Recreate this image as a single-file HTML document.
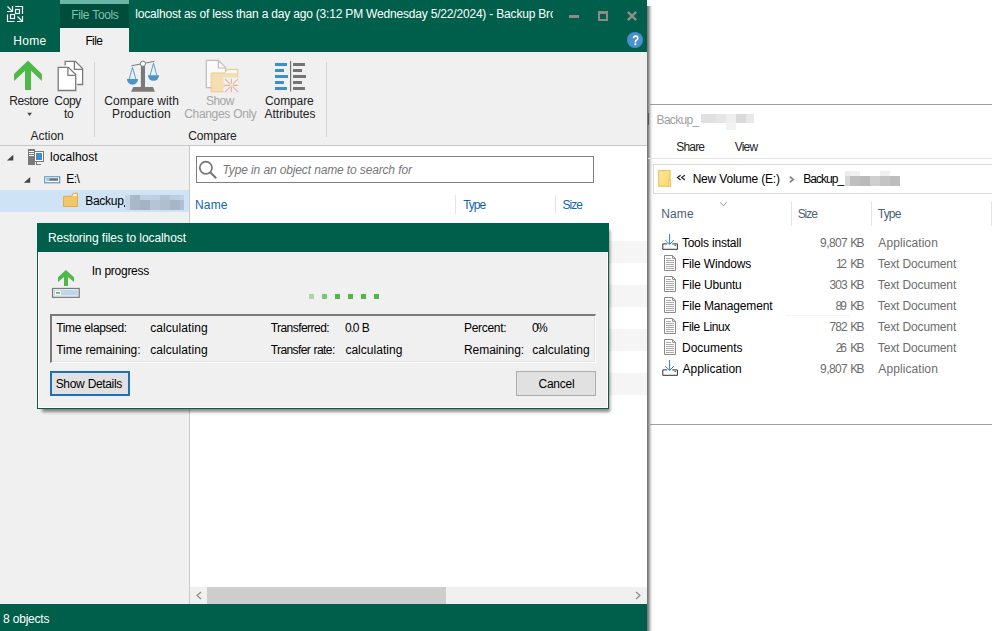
<!DOCTYPE html>
<html><head><meta charset="utf-8"><style>
html,body{margin:0;padding:0;width:992px;height:631px;overflow:hidden;background:#fff;position:relative;font-family:"Liberation Sans",sans-serif;}
body div,body svg{position:absolute;}
.t{white-space:pre;}
</style></head><body>
<div style="left:0px;top:0px;width:647px;height:52px;background:#005f4a;"></div>
<div style="left:60px;top:0px;width:69px;height:4px;background:#6ab5a3;"></div>
<div style="left:60px;top:4px;width:69px;height:24px;background:#004d3d;"></div>
<div class="t" style="left:71.20px;top:8.00px;font-size:12px;line-height:14px;color:#7cc4b0;letter-spacing:-0.350px;word-spacing:0.350px;">File Tools</div>
<div style="left:0;top:0;width:553px;height:28px;overflow:hidden;">
<div class="t" style="left:135.20px;top:7.00px;font-size:12px;line-height:14px;color:#fff;letter-spacing:-0.19px;">localhost as of less than a day ago (3:12 PM Wednesday 5/22/2024) - Backup Bro</div>
</div>
<svg style="left:0px;top:0px;" width="30" height="30" viewBox="0 0 30 30"><g stroke="#fff" stroke-width="1.2" fill="none"><path d="M7.5 6.5 L12 11"/><path d="M12.5 6 V11.5 H7"/><path d="M15.2 6.5 H22.5 V14"/><rect x="15.5" y="9.5" width="4" height="4"/><rect x="10.5" y="14.5" width="4" height="4"/><path d="M7.5 14.5 V21.5 H14.5"/><path d="M17.5 16.5 L22 21"/><path d="M22.5 16 V21.5 H17"/></g></svg>
<div style="left:569px;top:15px;width:10px;height:3px;background:#8e8a8a;"></div>
<svg style="left:596px;top:9px;" width="14" height="14" viewBox="0 0 14 14"><rect x="3" y="3" width="8" height="8" fill="none" stroke="#8e8a8a" stroke-width="2"/><rect x="2" y="2" width="10" height="3" fill="#8e8a8a"/></svg>
<svg style="left:625px;top:9px;" width="14" height="14" viewBox="0 0 14 14"><path d="M2.8 2.8 L11.2 11.2 M11.2 2.8 L2.8 11.2" stroke="#8e8a8a" stroke-width="2.6"/></svg>
<svg style="left:626px;top:31px;" width="18" height="18" viewBox="0 0 18 18"><circle cx="9" cy="9" r="8" fill="#4a90cf"/><path d="M7.6 7.3 Q7.6 5.1 9.7 5.1 Q11.8 5.1 11.8 7.1 Q11.8 8.4 10.4 9.2 Q9.3 9.8 9.3 11.2 V11.6" fill="none" stroke="#fff" stroke-width="1.6"/><rect x="8.4" y="12.3" width="1.9" height="1.8" fill="#fff"/></svg>
<div class="t" style="left:13.30px;top:34.00px;font-size:12px;line-height:14px;color:#fff;letter-spacing:0.300px;word-spacing:-0.300px;">Home</div>
<div style="left:60px;top:28px;width:69px;height:24px;background:#f0f0f0;"></div>
<div class="t" style="left:85.40px;top:34.00px;font-size:12px;line-height:14px;color:#000;letter-spacing:-0.600px;word-spacing:0.600px;">File</div>
<div style="left:0px;top:52px;width:647px;height:93px;background:#f0f0f0;"></div>
<div style="left:0px;top:145px;width:647px;height:1px;background:#c8c8c8;"></div>
<div style="left:94px;top:62px;width:1px;height:75px;background:#d5d5d5;"></div>
<div style="left:326px;top:62px;width:1px;height:75px;background:#d5d5d5;"></div>
<svg style="left:0px;top:52px;" width="50" height="45" viewBox="0 0 50 45"><path d="M28 8.6 L41.9 22 V29 L31.1 18.8 V37.9 H25 V18.8 L14 29 V22 Z" fill="#4fb848"/></svg>
<div class="t" style="left:9.20px;top:94.00px;font-size:12px;line-height:14px;color:#222;letter-spacing:-0.417px;word-spacing:0.417px;">Restore</div>
<svg style="left:25px;top:111px;" width="8" height="6" viewBox="0 0 8 6"><path d="M2.2 1.8 H7 L4.6 5 Z" fill="#444"/></svg>
<svg style="left:50px;top:55px;" width="40" height="40" viewBox="0 0 40 40"><g fill="#fff" stroke="#7a7a7a" stroke-width="1.3"><path d="M15.2 10.5 V6.3 H25.3 L32.6 13.6 V29.5 H27.2"/><path d="M8.2 12.4 H18.4 L25.7 19.6 V35.5 H8.2 Z"/><path d="M17.9 12.4 V20.3 H25.7" fill="none"/><path d="M24.4 6.3 V14.3 H32.6" fill="none"/></g></svg>
<div class="t" style="left:54.30px;top:94.00px;font-size:12px;line-height:14px;color:#222;letter-spacing:-0.333px;word-spacing:0.333px;">Copy</div>
<div class="t" style="left:63.90px;top:107.00px;font-size:12px;line-height:14px;color:#222;letter-spacing:-0.200px;word-spacing:0.200px;">to</div>
<div class="t" style="left:30.40px;top:129.00px;font-size:12px;line-height:14px;color:#222;letter-spacing:0.000px;word-spacing:-0.000px;">Action</div>
<svg style="left:120px;top:55px;" width="50" height="40" viewBox="0 0 50 40"><g><path d="M11.4 10.8 L34.5 6.3" stroke="#7a7a7a" stroke-width="1"/><rect x="20.9" y="10.5" width="4.1" height="22" fill="#7a7a7a"/><path d="M13.3 32 H33 L34.9 36.8 H11.1 Z" fill="#7a7a7a"/><circle cx="22.9" cy="8.7" r="2.6" fill="#fff" stroke="#7a7a7a" stroke-width="1"/><path d="M12.5 12.4 L9.2 24.1 M12.5 12.4 L15.8 24.1" stroke="#4a94cc" stroke-width="0.9" fill="none"/><path d="M6.9 24.1 H18.1 A5.6 5.6 0 0 1 6.9 24.1 Z" fill="#4a94cc"/><path d="M33.5 8.2 L30.2 20.2 M33.5 8.2 L36.8 20.2" stroke="#4a94cc" stroke-width="0.9" fill="none"/><path d="M27.9 20.2 H39.1 A5.6 5.6 0 0 1 27.9 20.2 Z" fill="#4a94cc"/></g></svg>
<div class="t" style="left:104.20px;top:94.00px;font-size:12px;line-height:14px;color:#222;letter-spacing:0.060px;word-spacing:-0.060px;">Compare with</div>
<div class="t" style="left:112.00px;top:107.00px;font-size:12px;line-height:14px;color:#222;letter-spacing:0.144px;word-spacing:-0.144px;">Production</div>
<svg style="left:200px;top:55px;" width="45" height="40" viewBox="0 0 45 40"><g><path d="M6.3 5.4 H18.4 L25.7 12.7 V32.6 H6.3 Z" fill="#fafafa" stroke="#bdbdbd" stroke-width="1.2"/><path d="M18.4 5.4 V13 H25.7" fill="none" stroke="#bdbdbd" stroke-width="1.2"/><path d="M11.1 18 H24.5 L27.9 14.3 H37.9 V36.8 H11.1 Z" fill="#f3dfb1" stroke="#eccb85" stroke-width="1"/><path d="M25 18 L28 15.3 H37 V18 Z" fill="#fafafa"/><path d="M23.5 22.5 H38.5 V37.5 H23.5 V33 L25 31.5 V29 L23.5 27.5 Z" fill="#eef2f6"/><g stroke="#ebab9b" stroke-width="1.1"><path d="M31.4 23.8 V37 M24.7 30.4 H38 M25.3 24.1 L37.9 36.8 M37.9 24.1 L25.3 36.8"/></g><rect x="29.6" y="28.4" width="3.8" height="3.8" fill="#f3e0b8"/></g></svg>
<div class="t" style="left:206.00px;top:94.00px;font-size:12px;line-height:14px;color:#a6a6a6;letter-spacing:-0.533px;word-spacing:0.533px;">Show</div>
<div class="t" style="left:184.30px;top:107.00px;font-size:12px;line-height:14px;color:#a6a6a6;letter-spacing:-0.350px;word-spacing:0.350px;">Changes Only</div>
<svg style="left:268px;top:55px;" width="45" height="40" viewBox="0 0 45 40"><g fill="#3d8fcc"><rect x="7" y="8" width="12" height="3"/><rect x="7" y="14" width="9" height="3"/><rect x="7" y="20" width="13" height="3"/><rect x="7" y="26" width="9" height="3"/><rect x="7" y="32" width="12" height="3"/></g><g fill="#747474"><rect x="25" y="8" width="12" height="3"/><rect x="25" y="14" width="9" height="3"/><rect x="25" y="20" width="13" height="3"/><rect x="25" y="26" width="9" height="3"/><rect x="25" y="32" width="12" height="3"/><rect x="22" y="6" width="1.2" height="30.5"/></g></svg>
<div class="t" style="left:265.00px;top:94.00px;font-size:12px;line-height:14px;color:#222;letter-spacing:-0.100px;word-spacing:0.100px;">Compare</div>
<div class="t" style="left:264.40px;top:107.00px;font-size:12px;line-height:14px;color:#222;letter-spacing:0.044px;word-spacing:-0.044px;">Attributes</div>
<div class="t" style="left:188.30px;top:129.00px;font-size:12px;line-height:14px;color:#222;letter-spacing:-0.150px;word-spacing:0.150px;">Compare</div>
<div style="left:0px;top:146px;width:189px;height:458px;background:#f0f0f0;"></div>
<svg style="left:0px;top:146px;" width="190" height="70" viewBox="0 0 190 70"><path d="M6.9 14.5 H13.3 V8.8 Z" fill="#444"/><path d="M23.9 36.7 H30.2 V31 Z" fill="#444"/></svg>
<svg style="left:26px;top:147px;" width="20" height="20" viewBox="0 0 20 20"><rect x="2" y="2" width="7" height="16" fill="#7a7a7a"/><rect x="3" y="4" width="5" height="1" fill="#fff"/><rect x="3" y="6" width="5" height="1" fill="#fff"/><rect x="3" y="8" width="5" height="1" fill="#fff"/><rect x="9" y="4" width="9" height="11" fill="#7a7a7a"/><rect x="9" y="5" width="8" height="9" fill="#fff"/><rect x="10" y="6" width="6" height="7" fill="#3d8fcc"/><rect x="10" y="15" width="1" height="3" fill="#7a7a7a"/><rect x="10" y="17" width="5" height="1" fill="#7a7a7a"/></svg>
<div class="t" style="left:50.10px;top:150.00px;font-size:12px;line-height:14px;color:#000;letter-spacing:0.025px;word-spacing:-0.025px;">localhost</div>
<svg style="left:43px;top:175px;" width="19" height="10" viewBox="0 0 19 10"><rect x="1.7" y="1.8" width="15" height="6" fill="#fff" stroke="#4a94cc" stroke-width="1.1"/><rect x="3.6" y="3.3" width="11.4" height="2.4" fill="#6d6d6d"/><rect x="3.6" y="3.3" width="3" height="2.4" fill="#a9cbe6"/></svg>
<div class="t" style="left:66.20px;top:172.00px;font-size:12px;line-height:14px;color:#000;letter-spacing:-0.550px;word-spacing:0.550px;">E:\</div>
<div style="left:0px;top:190px;width:189px;height:22px;background:#cfe3f7;"></div>
<svg style="left:62px;top:192px;" width="17" height="16" viewBox="0 0 17 16"><path d="M1.5 4.3 H9.6 L11.2 1.3 H15.5 V14.5 H1.5 Z" fill="#f2c66a" stroke="#e3ac45" stroke-width="1"/><path d="M11.6 2 H14.8 V4 H10.6 Z" fill="#fff"/></svg>
<div class="t" style="left:85.30px;top:194.00px;font-size:12px;line-height:14px;color:#000;letter-spacing:-0.300px;word-spacing:0.300px;">Backup</div>
<div style="left:124px;top:205px;width:1px;height:2px;background:#222;"></div>
<div style="left:125px;top:195px;width:5px;height:5px;background:#c4d6e8;"></div>
<div style="left:130px;top:195px;width:10px;height:5px;background:#a9b9c9;"></div>
<div style="left:140px;top:195px;width:10px;height:5px;background:#bfd0e2;"></div>
<div style="left:150px;top:195px;width:10px;height:5px;background:#bdcfe0;"></div>
<div style="left:160px;top:195px;width:10px;height:5px;background:#b3c3d4;"></div>
<div style="left:170px;top:195px;width:10px;height:5px;background:#bccde0;"></div>
<div style="left:180px;top:195px;width:4px;height:5px;background:#c2d3e5;"></div>
<div style="left:125px;top:200px;width:5px;height:10px;background:#c4d6e8;"></div>
<div style="left:130px;top:200px;width:10px;height:10px;background:#a9b9c9;"></div>
<div style="left:140px;top:200px;width:10px;height:10px;background:#a3b3c3;"></div>
<div style="left:150px;top:200px;width:10px;height:10px;background:#b5c5d6;"></div>
<div style="left:160px;top:200px;width:10px;height:10px;background:#aebfcf;"></div>
<div style="left:170px;top:200px;width:10px;height:10px;background:#a6b6c7;"></div>
<div style="left:180px;top:200px;width:4px;height:10px;background:#b0c0d0;"></div>
<div style="left:190px;top:146px;width:457px;height:441px;background:#fff;"></div>
<div style="left:196px;top:156px;width:398px;height:27px;background:#fff;border:1px solid #7f7f7f;box-sizing:border-box;"></div>
<svg style="left:197px;top:160px;" width="22" height="22" viewBox="0 0 22 22"><circle cx="8.9" cy="7.8" r="6.1" fill="none" stroke="#747474" stroke-width="1.7"/><path d="M13.2 12.2 L19.2 18.2" stroke="#747474" stroke-width="2"/></svg>
<div class="t" style="left:222.60px;top:163.00px;font-size:12px;line-height:14px;color:#777;font-style:italic;letter-spacing:-0.164px;word-spacing:0.164px;">Type in an object name to search for</div>
<div class="t" style="left:195.10px;top:198.00px;font-size:12px;line-height:14px;color:#0f64b0;letter-spacing:0.100px;word-spacing:-0.100px;">Name</div>
<div style="left:455px;top:195px;width:1px;height:19px;background:#e5e5e5;"></div>
<div class="t" style="left:463.20px;top:198.00px;font-size:12px;line-height:14px;color:#0f64b0;letter-spacing:-1.000px;word-spacing:1.000px;">Type</div>
<div style="left:555px;top:195px;width:1px;height:19px;background:#e5e5e5;"></div>
<div class="t" style="left:562.60px;top:198.00px;font-size:12px;line-height:14px;color:#0f64b0;letter-spacing:-1.033px;word-spacing:1.033px;">Size</div>
<div style="left:190px;top:241px;width:457px;height:22px;background:#f5f5f5;"></div>
<div style="left:190px;top:285px;width:457px;height:22px;background:#f5f5f5;"></div>
<div style="left:190px;top:329px;width:457px;height:22px;background:#f5f5f5;"></div>
<div style="left:190px;top:373px;width:457px;height:22px;background:#f5f5f5;"></div>
<div style="left:190px;top:587px;width:457px;height:17px;background:#f0f0f0;"></div>
<div style="left:207px;top:587px;width:239px;height:17px;background:#cdcdcd;"></div>
<svg style="left:193px;top:589px;" width="12" height="13" viewBox="0 0 12 13"><path d="M8 3 L4 6.5 L8 10" fill="none" stroke="#8a8a8a" stroke-width="1.2"/></svg>
<svg style="left:632px;top:589px;" width="12" height="13" viewBox="0 0 12 13"><path d="M4 3 L8 6.5 L4 10" fill="none" stroke="#8a8a8a" stroke-width="1.2"/></svg>
<div style="left:189px;top:146px;width:1px;height:458px;background:#c8c8c8;"></div>
<div style="left:0px;top:604px;width:647px;height:27px;background:#005f4a;"></div>
<div class="t" style="left:3.00px;top:612.00px;font-size:12px;line-height:14px;color:#fff;letter-spacing:-0.229px;word-spacing:0.229px;">8 objects</div>
<div style="left:647px;top:6px;width:6px;height:625px;background:linear-gradient(90deg,#6e6e6e 0px,#8c8c8c 1.5px,#c4c4c4 3px,#eee 4.5px,#fff 6px);"></div>
<div style="left:648px;top:113px;width:1px;height:12px;background:#555;"></div>
<div style="left:648px;top:104px;width:344px;height:1px;background:#9d9d9d;"></div>
<div class="t" style="left:656.60px;top:113.00px;font-size:12px;line-height:14px;color:#a0a0a0;letter-spacing:-0.700px;word-spacing:0.700px;">Backup_</div>
<div style="left:701px;top:114px;width:15px;height:9px;background:#e0e0e0;"></div>
<div style="left:716px;top:114px;width:10px;height:9px;background:#e6e6e6;"></div>
<div style="left:726px;top:114px;width:10px;height:9px;background:#efefef;"></div>
<div style="left:736px;top:114px;width:10px;height:9px;background:#dadada;"></div>
<div style="left:746px;top:114px;width:8px;height:9px;background:#e8e8e8;"></div>
<div style="left:726px;top:123px;width:10px;height:7px;background:#f2f2f2;"></div>
<div class="t" style="left:676.20px;top:140.00px;font-size:12px;line-height:14px;color:#222;letter-spacing:-0.800px;word-spacing:0.800px;">Share</div>
<div class="t" style="left:734.70px;top:140.00px;font-size:12px;line-height:14px;color:#222;letter-spacing:-0.767px;word-spacing:0.767px;">View</div>
<div style="left:648px;top:158px;width:344px;height:1px;background:#e5e5e5;"></div>
<div style="left:653px;top:164px;width:339px;height:30px;background:#fff;border:1px solid #d9d9d9;border-right:none;box-sizing:border-box;"></div>
<svg style="left:657px;top:169px;" width="16" height="19" viewBox="0 0 16 19"><defs><linearGradient id="fg" x1="0" y1="0" x2="1" y2="1"><stop offset="0" stop-color="#fde79a"/><stop offset="1" stop-color="#f8d970"/></linearGradient></defs><rect x="1.7" y="1.6" width="11.4" height="15.6" fill="url(#fg)" stroke="#eac04c" stroke-width="1"/><rect x="11.9" y="10.8" width="1.8" height="6.4" fill="#fff3c0" stroke="#eac04c" stroke-width="0.9"/></svg>
<svg style="left:675px;top:173px;" width="12" height="10" viewBox="0 0 12 10"><path d="M5.6 2.3 L2.6 4.6 L5.6 6.9 M9.8 2.3 L6.8 4.6 L9.8 6.9" fill="none" stroke="#222" stroke-width="1.3"/></svg>
<div class="t" style="left:692.70px;top:172.00px;font-size:12px;line-height:14px;color:#000;letter-spacing:-0.233px;word-spacing:0.233px;">New Volume (E:)</div>
<svg style="left:786px;top:173px;" width="10" height="12" viewBox="0 0 10 12"><path d="M3.8 3.6 L7.2 6.5 L3.8 9.4" fill="none" stroke="#888" stroke-width="1.8"/></svg>
<div class="t" style="left:803.30px;top:172.00px;font-size:12px;line-height:14px;color:#000;letter-spacing:-0.967px;word-spacing:0.967px;">Backup_</div>
<div style="left:845px;top:171px;width:5px;height:5px;background:#ebebeb;"></div>
<div style="left:850px;top:171px;width:10px;height:5px;background:#f0f0f0;"></div>
<div style="left:880px;top:171px;width:10px;height:5px;background:#f0f0f0;"></div>
<div style="left:845px;top:176px;width:5px;height:10px;background:#d8d8d8;"></div>
<div style="left:850px;top:176px;width:10px;height:10px;background:#bfbfbf;"></div>
<div style="left:860px;top:176px;width:10px;height:10px;background:#bababa;"></div>
<div style="left:870px;top:176px;width:10px;height:10px;background:#cfcfcf;"></div>
<div style="left:880px;top:176px;width:10px;height:10px;background:#c4c4c4;"></div>
<div style="left:890px;top:176px;width:10px;height:10px;background:#bdbdbd;"></div>
<svg style="left:718px;top:200px;" width="11" height="8" viewBox="0 0 11 8"><path d="M2.2 2.4 L5.5 5.6 L8.8 2.4" fill="none" stroke="#8f8f8f" stroke-width="1"/></svg>
<div class="t" style="left:661.20px;top:207.00px;font-size:12px;line-height:14px;color:#4c607a;letter-spacing:0.167px;word-spacing:-0.167px;">Name</div>
<div style="left:791px;top:201px;width:1px;height:25px;background:#e5e5e5;"></div>
<div class="t" style="left:797.70px;top:207.00px;font-size:12px;line-height:14px;color:#4c607a;letter-spacing:-1.067px;word-spacing:1.067px;">Size</div>
<div style="left:871px;top:201px;width:1px;height:25px;background:#e5e5e5;"></div>
<div class="t" style="left:877.80px;top:207.00px;font-size:12px;line-height:14px;color:#4c607a;letter-spacing:-0.800px;word-spacing:0.800px;">Type</div>
<div style="left:991px;top:201px;width:1px;height:25px;background:#e5e5e5;"></div>
<svg style="left:660px;top:234px;" width="20" height="17" viewBox="0 0 20 17"><path d="M7.3 9.9 H2.8 V15.3 H17.4 V9.9 H12.2" fill="none" stroke="#2f2f2f" stroke-width="1"/><rect x="14.5" y="11" width="1.5" height="1" fill="#555"/><path d="M9.6 0 V10.6 M5.4 6.2 L9.6 10.4 L13.8 6.2" fill="none" stroke="#2b7dd0" stroke-width="1"/></svg>
<div class="t" style="left:681.90px;top:236.00px;font-size:12px;line-height:14px;color:#000;letter-spacing:-0.236px;word-spacing:0.236px;">Tools install</div>
<div class="t" style="left:820.10px;top:236.00px;font-size:12px;line-height:14px;color:#6d6d6d;letter-spacing:-0.600px;word-spacing:0.600px;">9,807</div>
<div class="t" style="left:850.30px;top:236.00px;font-size:12px;line-height:14px;color:#6d6d6d;letter-spacing:-1.900px;word-spacing:1.900px;">KB</div>
<div class="t" style="left:878.30px;top:236.00px;font-size:12px;line-height:14px;color:#6d6d6d;letter-spacing:0.080px;word-spacing:-0.080px;">Application</div>
<svg style="left:662px;top:255px;" width="16" height="17" viewBox="0 0 16 17"><path d="M2.5 0.5 H10.6 L13.5 3.4 V15.5 H2.5 Z" fill="#fff" stroke="#8a8a8a" stroke-width="1"/><path d="M10.6 0.5 V3.4 H13.5" fill="none" stroke="#8a8a8a" stroke-width="1"/><path d="M4 3.5 H9 M4 5.5 H12 M4 7.5 H12 M4 9.5 H12 M4 11.5 H12 M4 13.5 H12" stroke="#a0a0a0" stroke-width="0.9"/></svg>
<div class="t" style="left:682.00px;top:257.00px;font-size:12px;line-height:14px;color:#000;letter-spacing:-0.210px;word-spacing:0.210px;">File Windows</div>
<div class="t" style="left:836.10px;top:257.00px;font-size:12px;line-height:14px;color:#6d6d6d;letter-spacing:-2.400px;word-spacing:2.400px;">12</div>
<div class="t" style="left:850.30px;top:257.00px;font-size:12px;line-height:14px;color:#6d6d6d;letter-spacing:-1.900px;word-spacing:1.900px;">KB</div>
<div class="t" style="left:877.80px;top:257.00px;font-size:12px;line-height:14px;color:#6d6d6d;letter-spacing:-0.145px;word-spacing:0.145px;">Text Document</div>
<svg style="left:662px;top:276px;" width="16" height="17" viewBox="0 0 16 17"><path d="M2.5 0.5 H10.6 L13.5 3.4 V15.5 H2.5 Z" fill="#fff" stroke="#8a8a8a" stroke-width="1"/><path d="M10.6 0.5 V3.4 H13.5" fill="none" stroke="#8a8a8a" stroke-width="1"/><path d="M4 3.5 H9 M4 5.5 H12 M4 7.5 H12 M4 9.5 H12 M4 11.5 H12 M4 13.5 H12" stroke="#a0a0a0" stroke-width="0.9"/></svg>
<div class="t" style="left:682.00px;top:278.00px;font-size:12px;line-height:14px;color:#000;letter-spacing:-0.178px;word-spacing:0.178px;">File Ubuntu</div>
<div class="t" style="left:829.60px;top:278.00px;font-size:12px;line-height:14px;color:#6d6d6d;letter-spacing:-0.950px;word-spacing:0.950px;">303</div>
<div class="t" style="left:850.30px;top:278.00px;font-size:12px;line-height:14px;color:#6d6d6d;letter-spacing:-1.900px;word-spacing:1.900px;">KB</div>
<div class="t" style="left:877.80px;top:278.00px;font-size:12px;line-height:14px;color:#6d6d6d;letter-spacing:-0.145px;word-spacing:0.145px;">Text Document</div>
<svg style="left:662px;top:297px;" width="16" height="17" viewBox="0 0 16 17"><path d="M2.5 0.5 H10.6 L13.5 3.4 V15.5 H2.5 Z" fill="#fff" stroke="#8a8a8a" stroke-width="1"/><path d="M10.6 0.5 V3.4 H13.5" fill="none" stroke="#8a8a8a" stroke-width="1"/><path d="M4 3.5 H9 M4 5.5 H12 M4 7.5 H12 M4 9.5 H12 M4 11.5 H12 M4 13.5 H12" stroke="#a0a0a0" stroke-width="0.9"/></svg>
<div class="t" style="left:682.00px;top:299.00px;font-size:12px;line-height:14px;color:#000;letter-spacing:-0.169px;word-spacing:0.169px;">File Management</div>
<div class="t" style="left:835.40px;top:299.00px;font-size:12px;line-height:14px;color:#6d6d6d;letter-spacing:-1.700px;word-spacing:1.700px;">89</div>
<div class="t" style="left:850.30px;top:299.00px;font-size:12px;line-height:14px;color:#6d6d6d;letter-spacing:-1.900px;word-spacing:1.900px;">KB</div>
<div class="t" style="left:877.80px;top:299.00px;font-size:12px;line-height:14px;color:#6d6d6d;letter-spacing:-0.145px;word-spacing:0.145px;">Text Document</div>
<svg style="left:662px;top:318px;" width="16" height="17" viewBox="0 0 16 17"><path d="M2.5 0.5 H10.6 L13.5 3.4 V15.5 H2.5 Z" fill="#fff" stroke="#8a8a8a" stroke-width="1"/><path d="M10.6 0.5 V3.4 H13.5" fill="none" stroke="#8a8a8a" stroke-width="1"/><path d="M4 3.5 H9 M4 5.5 H12 M4 7.5 H12 M4 9.5 H12 M4 11.5 H12 M4 13.5 H12" stroke="#a0a0a0" stroke-width="0.9"/></svg>
<div class="t" style="left:682.00px;top:320.00px;font-size:12px;line-height:14px;color:#000;letter-spacing:-0.375px;word-spacing:0.375px;">File Linux</div>
<div class="t" style="left:829.60px;top:320.00px;font-size:12px;line-height:14px;color:#6d6d6d;letter-spacing:-0.950px;word-spacing:0.950px;">782</div>
<div class="t" style="left:850.30px;top:320.00px;font-size:12px;line-height:14px;color:#6d6d6d;letter-spacing:-1.900px;word-spacing:1.900px;">KB</div>
<div class="t" style="left:877.80px;top:320.00px;font-size:12px;line-height:14px;color:#6d6d6d;letter-spacing:-0.145px;word-spacing:0.145px;">Text Document</div>
<svg style="left:662px;top:339px;" width="16" height="17" viewBox="0 0 16 17"><path d="M2.5 0.5 H10.6 L13.5 3.4 V15.5 H2.5 Z" fill="#fff" stroke="#8a8a8a" stroke-width="1"/><path d="M10.6 0.5 V3.4 H13.5" fill="none" stroke="#8a8a8a" stroke-width="1"/><path d="M4 3.5 H9 M4 5.5 H12 M4 7.5 H12 M4 9.5 H12 M4 11.5 H12 M4 13.5 H12" stroke="#a0a0a0" stroke-width="0.9"/></svg>
<div class="t" style="left:682.00px;top:341.00px;font-size:12px;line-height:14px;color:#000;letter-spacing:-0.025px;word-spacing:0.025px;">Documents</div>
<div class="t" style="left:835.70px;top:341.00px;font-size:12px;line-height:14px;color:#6d6d6d;letter-spacing:-2.000px;word-spacing:2.000px;">26</div>
<div class="t" style="left:850.30px;top:341.00px;font-size:12px;line-height:14px;color:#6d6d6d;letter-spacing:-1.900px;word-spacing:1.900px;">KB</div>
<div class="t" style="left:877.80px;top:341.00px;font-size:12px;line-height:14px;color:#6d6d6d;letter-spacing:-0.145px;word-spacing:0.145px;">Text Document</div>
<svg style="left:660px;top:360px;" width="20" height="17" viewBox="0 0 20 17"><path d="M7.3 9.9 H2.8 V15.3 H17.4 V9.9 H12.2" fill="none" stroke="#2f2f2f" stroke-width="1"/><rect x="14.5" y="11" width="1.5" height="1" fill="#555"/><path d="M9.6 0 V10.6 M5.4 6.2 L9.6 10.4 L13.8 6.2" fill="none" stroke="#2b7dd0" stroke-width="1"/></svg>
<div class="t" style="left:682.40px;top:362.00px;font-size:12px;line-height:14px;color:#000;letter-spacing:0.070px;word-spacing:-0.070px;">Application</div>
<div class="t" style="left:820.10px;top:362.00px;font-size:12px;line-height:14px;color:#6d6d6d;letter-spacing:-0.600px;word-spacing:0.600px;">9,807</div>
<div class="t" style="left:850.30px;top:362.00px;font-size:12px;line-height:14px;color:#6d6d6d;letter-spacing:-1.900px;word-spacing:1.900px;">KB</div>
<div class="t" style="left:878.30px;top:362.00px;font-size:12px;line-height:14px;color:#6d6d6d;letter-spacing:0.080px;word-spacing:-0.080px;">Application</div>
<div style="left:786px;top:315px;width:64px;height:1px;background:#f1f6fc;"></div>
<div style="left:648px;top:424px;width:344px;height:1px;background:#a0a0a0;"></div>
<div style="left:37px;top:223px;width:572px;height:186px;background:#f0f0f0;border:1px solid #0f5a47;box-sizing:border-box;box-shadow:3px 5px 3px -2px rgba(0,0,0,0.45);"></div>
<div style="left:38px;top:252px;width:570px;height:156px;background:#f0f0f0;border:1px solid #fff;border-top:none;box-sizing:border-box;"></div>
<div style="left:37px;top:223px;width:572px;height:29px;background:#005f4a;"></div>
<div class="t" style="left:47.90px;top:231.00px;font-size:12px;line-height:14px;color:#fff;letter-spacing:-0.079px;word-spacing:0.079px;">Restoring files to localhost</div>
<svg style="left:48px;top:262px;" width="36" height="40" viewBox="0 0 36 40"><path d="M17.9 7.9 L26 15.2 V20 L20 14.9 V24 H16 V14.9 L10 20 V15.2 Z" fill="#4fb848"/><rect x="4.6" y="26.5" width="26.6" height="8.8" fill="#fff" stroke="#7a7a7a" stroke-width="1.3"/><rect x="6" y="27.9" width="23.9" height="5.7" fill="#bcd6ee"/><rect x="7" y="28.8" width="6" height="4.2" fill="#fff"/><rect x="7.9" y="30.1" width="4.1" height="1.6" fill="#4fb848"/></svg>
<div class="t" style="left:91.70px;top:264.00px;font-size:12px;line-height:14px;color:#000;letter-spacing:-0.278px;word-spacing:0.278px;">In progress</div>
<div style="left:309px;top:294px;width:5px;height:5px;background:#acd5a8;"></div>
<div style="left:322px;top:294px;width:5px;height:5px;background:#7cc576;"></div>
<div style="left:335px;top:294px;width:5px;height:5px;background:#4fb848;"></div>
<div style="left:348px;top:294px;width:5px;height:5px;background:#4fb848;"></div>
<div style="left:361px;top:294px;width:5px;height:5px;background:#4fb848;"></div>
<div style="left:374px;top:294px;width:5px;height:5px;background:#4fb848;"></div>
<div style="left:50px;top:314px;width:546px;height:49px;background:#f0f0f0;border-top:2px solid #7a7a7a;border-left:2px solid #7a7a7a;border-bottom:1px solid #fff;border-right:1px solid #fff;box-sizing:border-box;box-shadow:inset -1px -1px 0 #e3e3e3;"></div>
<div class="t" style="left:56.30px;top:321.00px;font-size:12px;line-height:14px;color:#000;letter-spacing:-0.382px;word-spacing:0.382px;">Time elapsed:</div>
<div class="t" style="left:150.20px;top:321.00px;font-size:12px;line-height:14px;color:#000;letter-spacing:0.080px;word-spacing:-0.080px;">calculating</div>
<div class="t" style="left:270.70px;top:321.00px;font-size:12px;line-height:14px;color:#000;letter-spacing:-0.545px;word-spacing:0.545px;">Transferred:</div>
<div class="t" style="left:344.90px;top:321.00px;font-size:12px;line-height:14px;color:#000;letter-spacing:-1.067px;word-spacing:1.067px;">0.0 B</div>
<div class="t" style="left:464.00px;top:321.00px;font-size:12px;line-height:14px;color:#000;letter-spacing:-0.314px;word-spacing:0.314px;">Percent:</div>
<div class="t" style="left:532.00px;top:321.00px;font-size:12px;line-height:14px;color:#000;letter-spacing:-1.600px;word-spacing:1.600px;">0%</div>
<div class="t" style="left:56.30px;top:343.00px;font-size:12px;line-height:14px;color:#000;letter-spacing:-0.108px;word-spacing:0.108px;">Time remaining:</div>
<div class="t" style="left:150.20px;top:343.00px;font-size:12px;line-height:14px;color:#000;letter-spacing:0.080px;word-spacing:-0.080px;">calculating</div>
<div class="t" style="left:270.70px;top:343.00px;font-size:12px;line-height:14px;color:#000;letter-spacing:-0.583px;word-spacing:0.583px;">Transfer rate:</div>
<div class="t" style="left:345.40px;top:343.00px;font-size:12px;line-height:14px;color:#000;letter-spacing:0.030px;word-spacing:-0.030px;">calculating</div>
<div class="t" style="left:464.00px;top:343.00px;font-size:12px;line-height:14px;color:#000;letter-spacing:-0.067px;word-spacing:0.067px;">Remaining:</div>
<div class="t" style="left:532.20px;top:343.00px;font-size:12px;line-height:14px;color:#000;letter-spacing:0.070px;word-spacing:-0.070px;">calculating</div>
<div style="left:50px;top:371px;width:80px;height:25px;background:#e1e1e1;border:2px solid #1a71b8;box-sizing:border-box;"></div>
<div class="t" style="left:55.70px;top:377.00px;font-size:12px;line-height:14px;color:#000;letter-spacing:-0.350px;word-spacing:0.350px;">Show Details</div>
<div style="left:516px;top:371px;width:80px;height:25px;background:#e1e1e1;border:1px solid #adadad;box-sizing:border-box;"></div>
<div class="t" style="left:538.50px;top:377.00px;font-size:12px;line-height:14px;color:#000;letter-spacing:-0.240px;word-spacing:0.240px;">Cancel</div>
</body></html>
